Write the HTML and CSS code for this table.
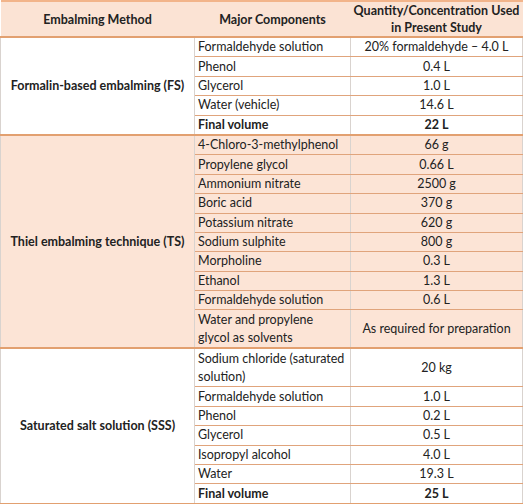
FILE: index.html
```html
<!DOCTYPE html>
<html lang="en">
<head>
    <meta charset="UTF-8">
    <meta name="viewport" content="width=device-width, initial-scale=1.0">
    <title>Embalming methods</title>
    <link rel="stylesheet" href="styles.css">
</head>
<body>
    <table class="recipe">
        <colgroup>
            <col class="c-method">
            <col class="c-comp">
            <col class="c-qty">
        </colgroup>
        <thead>
            <tr>
                <th>Embalming Method</th>
                <th>Major Components</th>
                <th><span class="nowrap">Quantity/Concentration Used</span><br>in Present Study</th>
            </tr>
        </thead>
        <tbody class="fs">
            <tr>
                <td class="method" rowspan="5">Formalin-based embalming (FS)</td>
                <td>Formaldehyde solution</td>
                <td class="qty">20% formaldehyde – 4.0 L</td>
            </tr>
            <tr><td>Phenol</td><td class="qty">0.4 L</td></tr>
            <tr><td>Glycerol</td><td class="qty">1.0 L</td></tr>
            <tr><td>Water (vehicle)</td><td class="qty">14.6 L</td></tr>
            <tr class="total"><td>Final volume</td><td class="qty">22 L</td></tr>
        </tbody>
        <tbody class="ts">
            <tr>
                <td class="method" rowspan="10">Thiel embalming technique (TS)</td>
                <td>4-Chloro-3-methylphenol</td>
                <td class="qty">66 g</td>
            </tr>
            <tr><td>Propylene glycol</td><td class="qty">0.66 L</td></tr>
            <tr><td>Ammonium nitrate</td><td class="qty">2500 g</td></tr>
            <tr><td>Boric acid</td><td class="qty">370 g</td></tr>
            <tr><td>Potassium nitrate</td><td class="qty">620 g</td></tr>
            <tr><td>Sodium sulphite</td><td class="qty">800 g</td></tr>
            <tr><td>Morpholine</td><td class="qty">0.3 L</td></tr>
            <tr><td>Ethanol</td><td class="qty">1.3 L</td></tr>
            <tr><td>Formaldehyde solution</td><td class="qty">0.6 L</td></tr>
            <tr class="tall"><td>Water and propylene glycol as solvents</td><td class="qty">As required for preparation</td></tr>
        </tbody>
        <tbody class="sss">
            <tr class="tall">
                <td class="method" rowspan="7">Saturated salt solution (SSS)</td>
                <td>Sodium chloride (saturated solution)</td>
                <td class="qty">20 kg</td>
            </tr>
            <tr><td>Formaldehyde solution</td><td class="qty">1.0 L</td></tr>
            <tr><td>Phenol</td><td class="qty">0.2 L</td></tr>
            <tr><td>Glycerol</td><td class="qty">0.5 L</td></tr>
            <tr><td>Isopropyl alcohol</td><td class="qty">4.0 L</td></tr>
            <tr><td>Water</td><td class="qty">19.3 L</td></tr>
            <tr class="total"><td>Final volume</td><td class="qty">25 L</td></tr>
        </tbody>
    </table>
</body>
</html>
```

FILE: styles.css
```css
body{
    margin: 0;
    background: #fff;
    font-family: Lato, "Liberation Sans", sans-serif;
    font-size: 12.5px;
    color: #222;
}

.recipe{
    width: 522px;
    border-collapse: collapse;
    table-layout: fixed;
    border-top: 2px solid #f2b48a;
}

.c-method{ width: 194px; }
.c-comp{ width: 156px; }
.c-qty{ width: 172px; }

.recipe th{
    background: #fbe3d4;
    font-weight: bold;
    height: 32px;
    line-height: 17px;
    padding: 0 2px;
    border-bottom: 2px solid #e2a070;
    text-align: center;
}

.nowrap{
    white-space: nowrap;
}

.recipe td{
    height: 18.4px;
    line-height: 18px;
    padding: 0 4px 0 3px;
    border: 1px solid #d9d3cf;
    border-top: none;
    border-bottom: 1px solid #e0a47c;
}

.recipe tbody{
    border-bottom: 2px solid #e2a070;
}

.recipe .method{
    font-weight: bold;
    text-align: center;
    padding: 0 6px;
    border-bottom: 2px solid #e2a070;
}

.recipe .qty{
    text-align: center;
    padding: 0 3px;
}

.recipe .tall td{
    height: 37px;
}

.recipe .total td{
    font-weight: bold;
}

.ts td{
    background: #fce4d6;
}
```
